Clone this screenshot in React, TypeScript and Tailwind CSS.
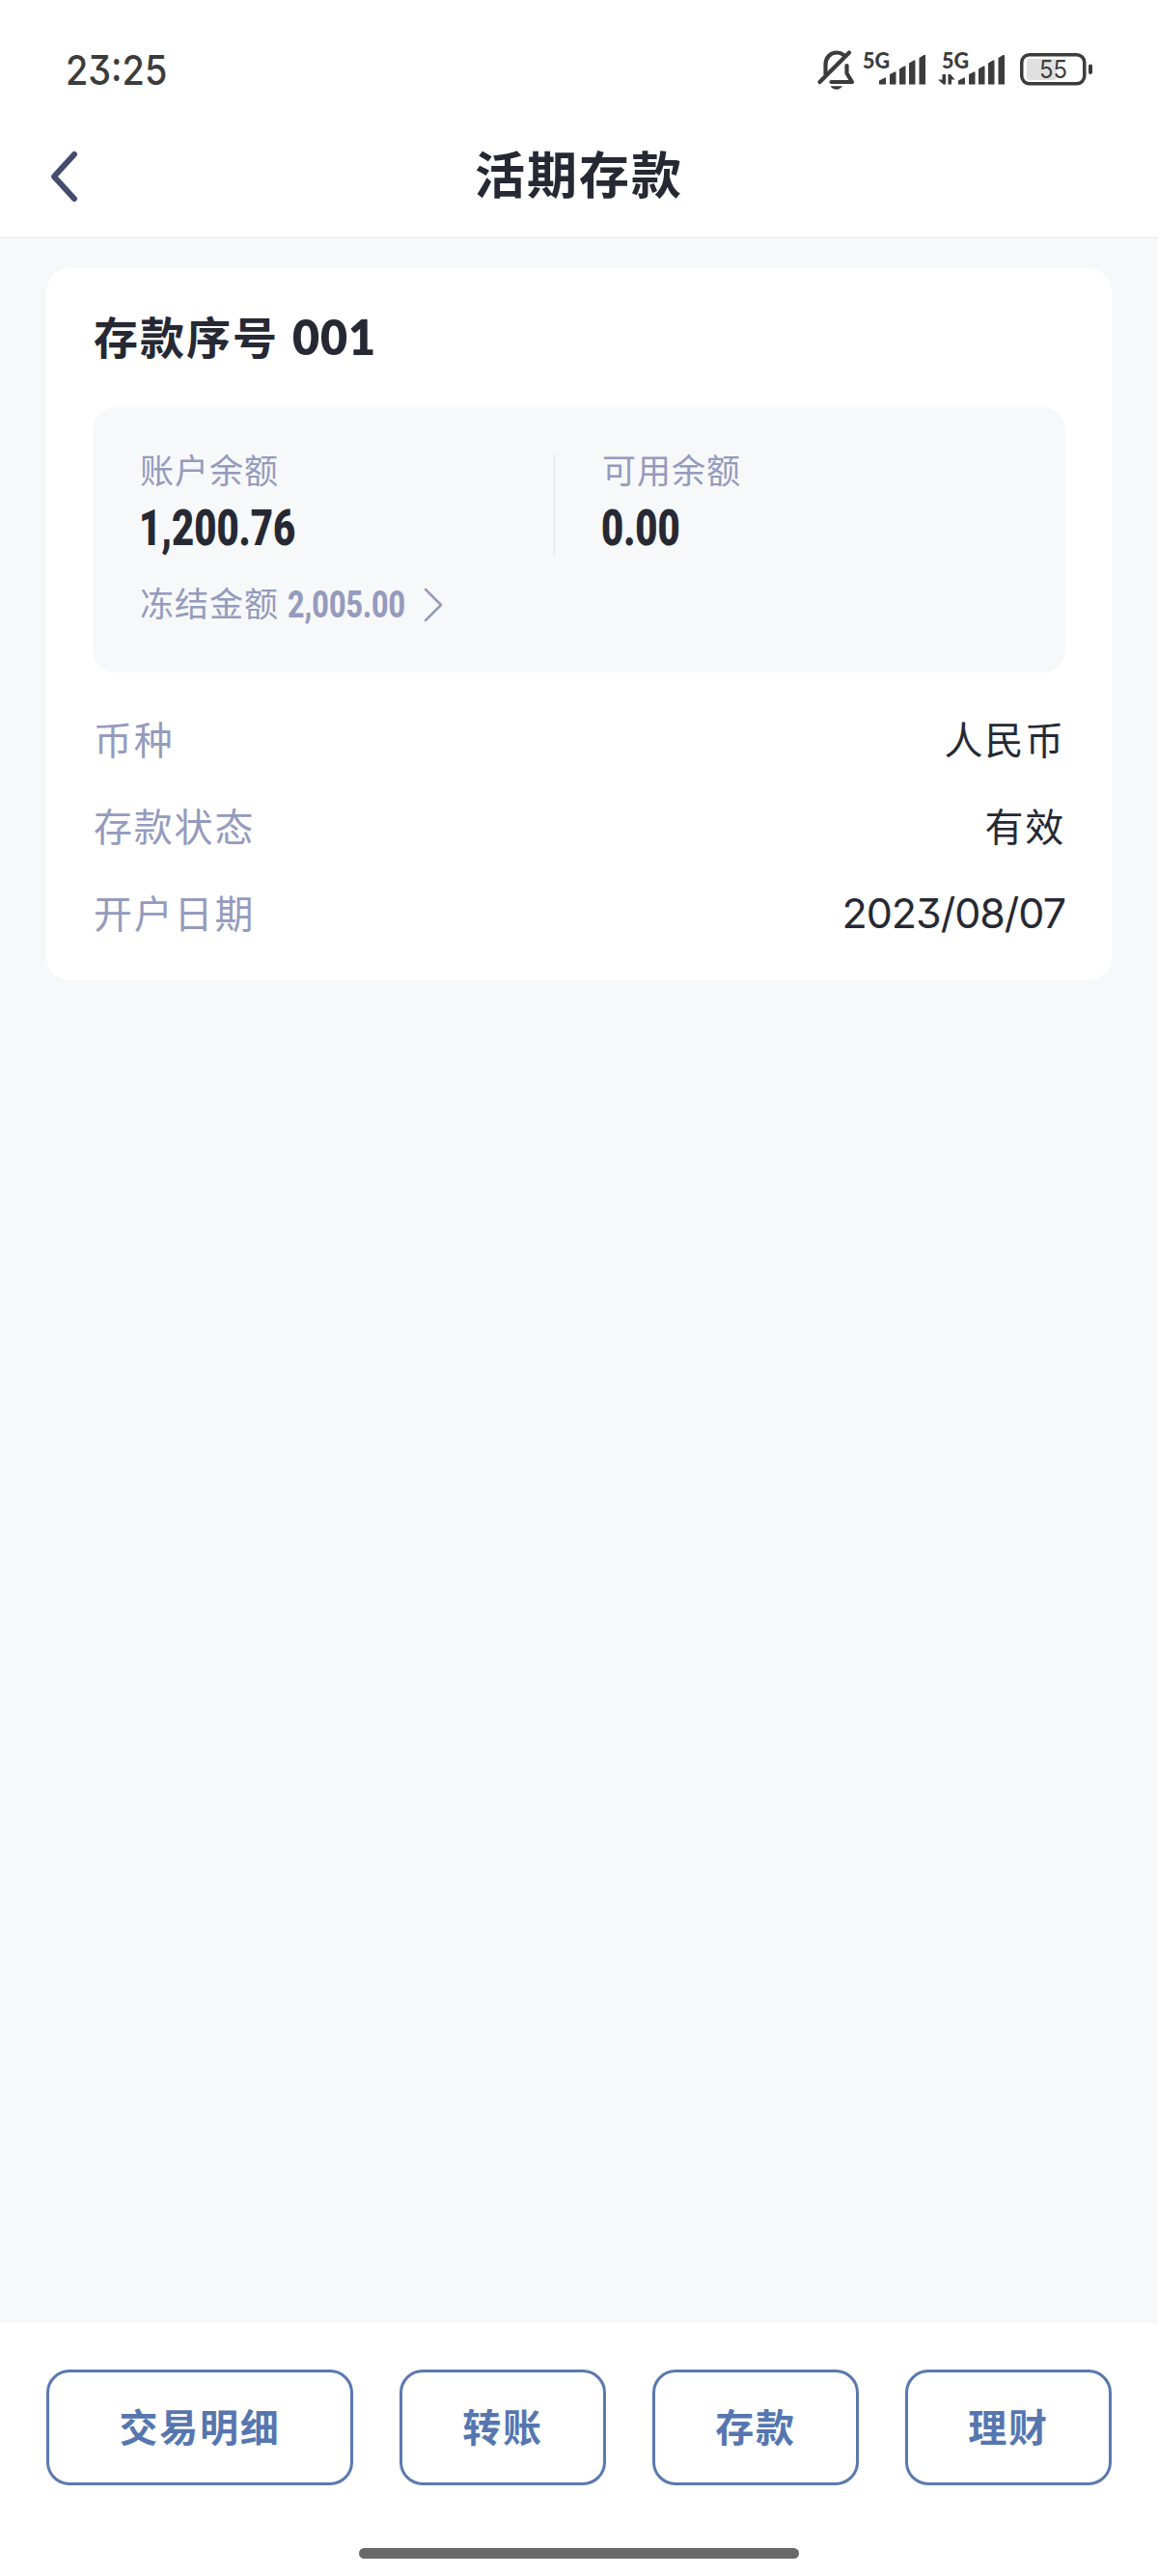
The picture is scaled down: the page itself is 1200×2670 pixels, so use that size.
function BellOffIcon() {
  return (
    <svg width="40" height="42" viewBox="846.500 51 40 42" fill="none" stroke="#3c3c3c" strokeWidth="4.200" strokeLinecap="round" strokeLinejoin="round">
      <path d="M856 77V67c0-7.500 5-12.500 11.500-12.500c3 0 5.500 1 7.500 2.600" />
      <path d="M850 85L880.500 54.500" />
      <path d="M878 68v8l5.500 9H862" />
      <path d="M861 89.200h12.500c-1.500 2-3.500 3.500-6.200 3.500s-4.800-1.500-6.300-3.500z" fill="#3c3c3c" stroke="none" />
    </svg>
  );
}

function SignalIcon({ data = false }: { data?: boolean }) {
  return (
    <svg width="70" height="54" viewBox="0 -8 70 54" fill="#3c3c3c">
      <text x="4" y="18" fontSize="23" fontWeight="900" textLength="28" lengthAdjust="spacingAndGlyphs" className="font-['Lato',sans-serif]">5G</text>
      {data && <path d="M4.500 24h3.500v10.500h-2.500L0 29.500h4.500zM10.500 24h2.500l4.500 5.500H14v5h-3.500z" />}
      <path d="M21 30.500l6-3h1v7h-7zM32 24l5-2.500h1.500v13H32zM42 18.500l5-3h1.500v19H42zM52 12.500l5-3h1.500v25H52zM62.500 7l5-3H69v30.500h-6.500z" />
    </svg>
  );
}

function BatteryIcon() {
  return (
    <svg width="76" height="34" viewBox="0 0 76 34">
      <rect x="7" y="6" width="31" height="22" rx="3" fill="#e0e0e0" />
      <rect x="1.750" y="1.750" width="65" height="30" rx="8" fill="none" stroke="#3c3c3c" strokeWidth="3.500" />
      <rect x="71" y="11.500" width="4" height="10.500" rx="2" fill="#3c3c3c" />
      <text x="20" y="26" fontSize="26" fill="#3c3c3c" textLength="29" lengthAdjust="spacingAndGlyphs" className="font-['Inter',sans-serif]">55</text>
    </svg>
  );
}

function StatusBar() {
  return (
    <div className="flex h-[112px] items-center justify-between pt-8 pr-[67px] pl-[68px] text-[#3c3c3c]">
      <span className="origin-left scale-x-[.88] font-['Inter'] text-[43px] leading-none font-medium [font-feature-settings:'cv09']">23:25</span>
      <div className="flex items-center">
        <BellOffIcon />
        <div className="ml-1 flex gap-3">
          <SignalIcon />
          <SignalIcon data />
        </div>
        <div className="ml-[15px]">
          <BatteryIcon />
        </div>
      </div>
    </div>
  );
}

function NavBar() {
  return (
    <div className="flex h-[135px] items-center border-b border-[#e6e7e9] px-12">
      <button className="flex w-12 pt-[7px] pl-[3px]">
        <svg width="32" height="56" viewBox="0 0 32 56" fill="none" stroke="#454d6d" strokeWidth="6" strokeLinecap="round" strokeLinejoin="round">
          <path d="M26 5L5 28L26 51" />
        </svg>
      </button>
      <h1 className="flex-1 text-center text-[52px] leading-[60px] font-bold tracking-[2px] text-[#262933]">活期存款</h1>
      <div className="w-12" />
    </div>
  );
}

function Amount({ label, value }: { label: string; value: string }) {
  return (
    <div>
      <div className="text-[35px] leading-[32px] tracking-[1px] text-[#959bbd]">{label}</div>
      <div className="mt-4 -ml-px origin-left scale-x-[.77] font-['Roboto'] text-[52px] leading-[60px] font-black text-[#262933]">{value}</div>
    </div>
  );
}

function BalancePanel() {
  return (
    <div className="h-[275px] rounded-3xl bg-[#f7f8fa] pt-12 pr-12 pl-[49px]">
      <div className="flex h-[106px]">
        <div className="w-[430px] border-r border-[#e4e6ea]">
          <Amount label="账户余额" value="1,200.76" />
        </div>
        <div className="pl-[49px]">
          <Amount label="可用余额" value="0.00" />
        </div>
      </div>
      <div className="mt-[27px] flex h-[44px] items-center text-[#959bbd]">
        <span className="pb-[3px] text-[35px] leading-[36px] tracking-[1px]">冻结金额</span>
        <span className="ml-[9px] w-[121px] origin-left scale-x-[.8] pt-[3px] font-['Roboto'] text-[38px] leading-[44px] font-extrabold">2,005.00</span>
        <svg className="ml-5 mt-1" width="20" height="36" viewBox="0 0 20 36" fill="none" stroke="#959bbd" strokeWidth="2.500" strokeLinecap="round" strokeLinejoin="round">
          <path d="M2 2l16 16L2 34" />
        </svg>
      </div>
    </div>
  );
}

function InfoRow({ label, children }: { label: string; children: React.ReactNode }) {
  return (
    <div className="flex h-[90px] items-center justify-between pl-px">
      <span className="text-[#959bbd]">{label}</span>
      <span className="text-[#262933]">{children}</span>
    </div>
  );
}

const actions = [
  { name: '交易明细', width: 'w-[318px]' },
  { name: '转账', width: 'w-[214px]' },
  { name: '存款', width: 'w-[214px]' },
  { name: '理财', width: 'w-[214px]' },
];

export default function App() {
  return (
    <div className="flex h-[2670px] w-[1200px] flex-col bg-white font-['Noto_Sans_CJK_SC',sans-serif]">
      <StatusBar />
      <NavBar />

      <main className="flex-1 bg-[#f7f8fa] px-12 pt-[31px]">
        <div className="h-[738px] rounded-3xl bg-white px-12">
          <h2 className="flex h-[144px] items-center pb-1.5 pl-px text-[46px] leading-none font-bold tracking-[2px] text-[#262933]">
            存款序号
            <span className="ml-[14px] origin-left scale-x-95 pt-[3px] font-['Lato'] text-[51px] font-extrabold tracking-[1px]">001</span>
          </h2>
          <BalancePanel />
          <div className="pt-[23px] text-[40px] leading-[48px] tracking-[1.800px]">
            <InfoRow label="币种">人民币</InfoRow>
            <InfoRow label="存款状态">有效</InfoRow>
            <InfoRow label="开户日期">
              <span className="inline-block pt-0.5 font-['Inter'] text-[43px] tracking-[-1px] [font-feature-settings:'cv09']">2023/08/07</span>
            </InfoRow>
          </div>
        </div>
      </main>

      <footer className="flex h-[262px] flex-col items-center justify-between px-12 pt-12 pb-[18px]">
        <div className="flex w-full justify-between">
          {actions.map((action) => (
            <button
              key={action.name}
              className={`h-[120px] rounded-3xl border-3 border-[#5a79b0] pb-[4px] text-[40px] leading-[48px] font-bold tracking-[1.800px] text-[#5676b0] ${action.width}`}
            >
              {action.name}
            </button>
          ))}
        </div>
        <div className="h-[11px] w-[456px] rounded-full bg-[#696969]" />
      </footer>
    </div>
  );
}
